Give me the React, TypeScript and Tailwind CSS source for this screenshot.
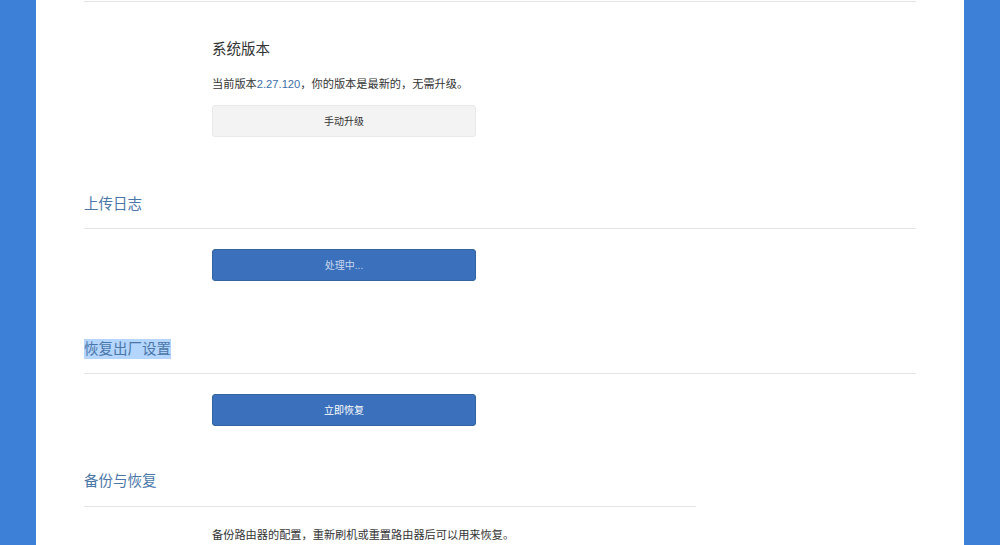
import React from 'react';

const font = { fontFamily: '"Liberation Sans", "Noto Sans CJK SC", sans-serif' };

const SectionTitle: React.FC<{ title: string; selected?: boolean; className?: string; lineClass?: string }> = ({
  title,
  selected = false,
  className = '',
  lineClass = 'pb-[14px]',
}) => (
  <div className={`border-b border-[#e4e4e4] ${lineClass} ${className}`}>
    <h2 className="text-[14.5px] leading-[20px] text-[#4a77a8] font-normal">
      <span className={`inline-block h-[20px] ${selected ? 'bg-[#b4d5fe]' : ''}`}>{title}</span>
    </h2>
  </div>
);

const ActionButton: React.FC<{ label: string; variant: 'gray' | 'blue' | 'busy'; className?: string }> = ({
  label,
  variant,
  className = '',
}) => {
  const styles = {
    gray: 'bg-[#f3f3f3] border-[#e9e9e9] text-[#333]',
    blue: 'bg-[#3a70bc] border-[#33649f] text-white',
    busy: 'bg-[#3a70bc] border-[#33649f] text-[#c9d7ee]',
  };
  return (
    <button
      className={`ml-[128px] w-[264px] h-[32px] rounded-[3px] border text-[10px] ${styles[variant]} ${className}`}
    >
      {label}
    </button>
  );
};

export default function App() {
  return (
    <div className="flex h-screen overflow-hidden bg-white text-[#333]" style={font}>
      <div className="w-[36px] shrink-0 bg-[#3d80d7]" />

      <main className="flex-1 px-[48px]">
        <div className="mt-px h-px bg-[#e4e4e4]" />

        {/* 系统版本 */}
        <div className="ml-[128px] mt-[37px]">
          <h3 className="text-[14.5px] leading-[20px] text-[#333] font-normal">系统版本</h3>
          <p className="mt-[16px] text-[11.2px] leading-[18px]">
            当前版本<span className="text-[#3b6fa8]">2.27.120</span>，你的版本是最新的，无需升级。
          </p>
        </div>
        <div className="mt-[12px]">
          <ActionButton label="手动升级" variant="gray" />
        </div>

        {/* 上传日志 */}
        <SectionTitle title="上传日志" className="mt-[57px]" />
        <div className="mt-[20px]">
          <ActionButton label="处理中..." variant="busy" />
        </div>

        {/* 恢复出厂设置 */}
        <SectionTitle title="恢复出厂设置" selected className="mt-[58px]" />
        <div className="mt-[20px]">
          <ActionButton label="立即恢复" variant="blue" />
        </div>

        {/* 备份与恢复 */}
        <div className="w-[612px]">
          <SectionTitle title="备份与恢复" className="mt-[45px]" lineClass="pb-[15px]" />
        </div>
        <p className="ml-[128px] mt-[19px] text-[11.2px] leading-[18px]">
          备份路由器的配置，重新刷机或重置路由器后可以用来恢复。
        </p>
      </main>

      <div className="w-[36px] shrink-0 bg-[#3d80d7]" />
    </div>
  );
}
